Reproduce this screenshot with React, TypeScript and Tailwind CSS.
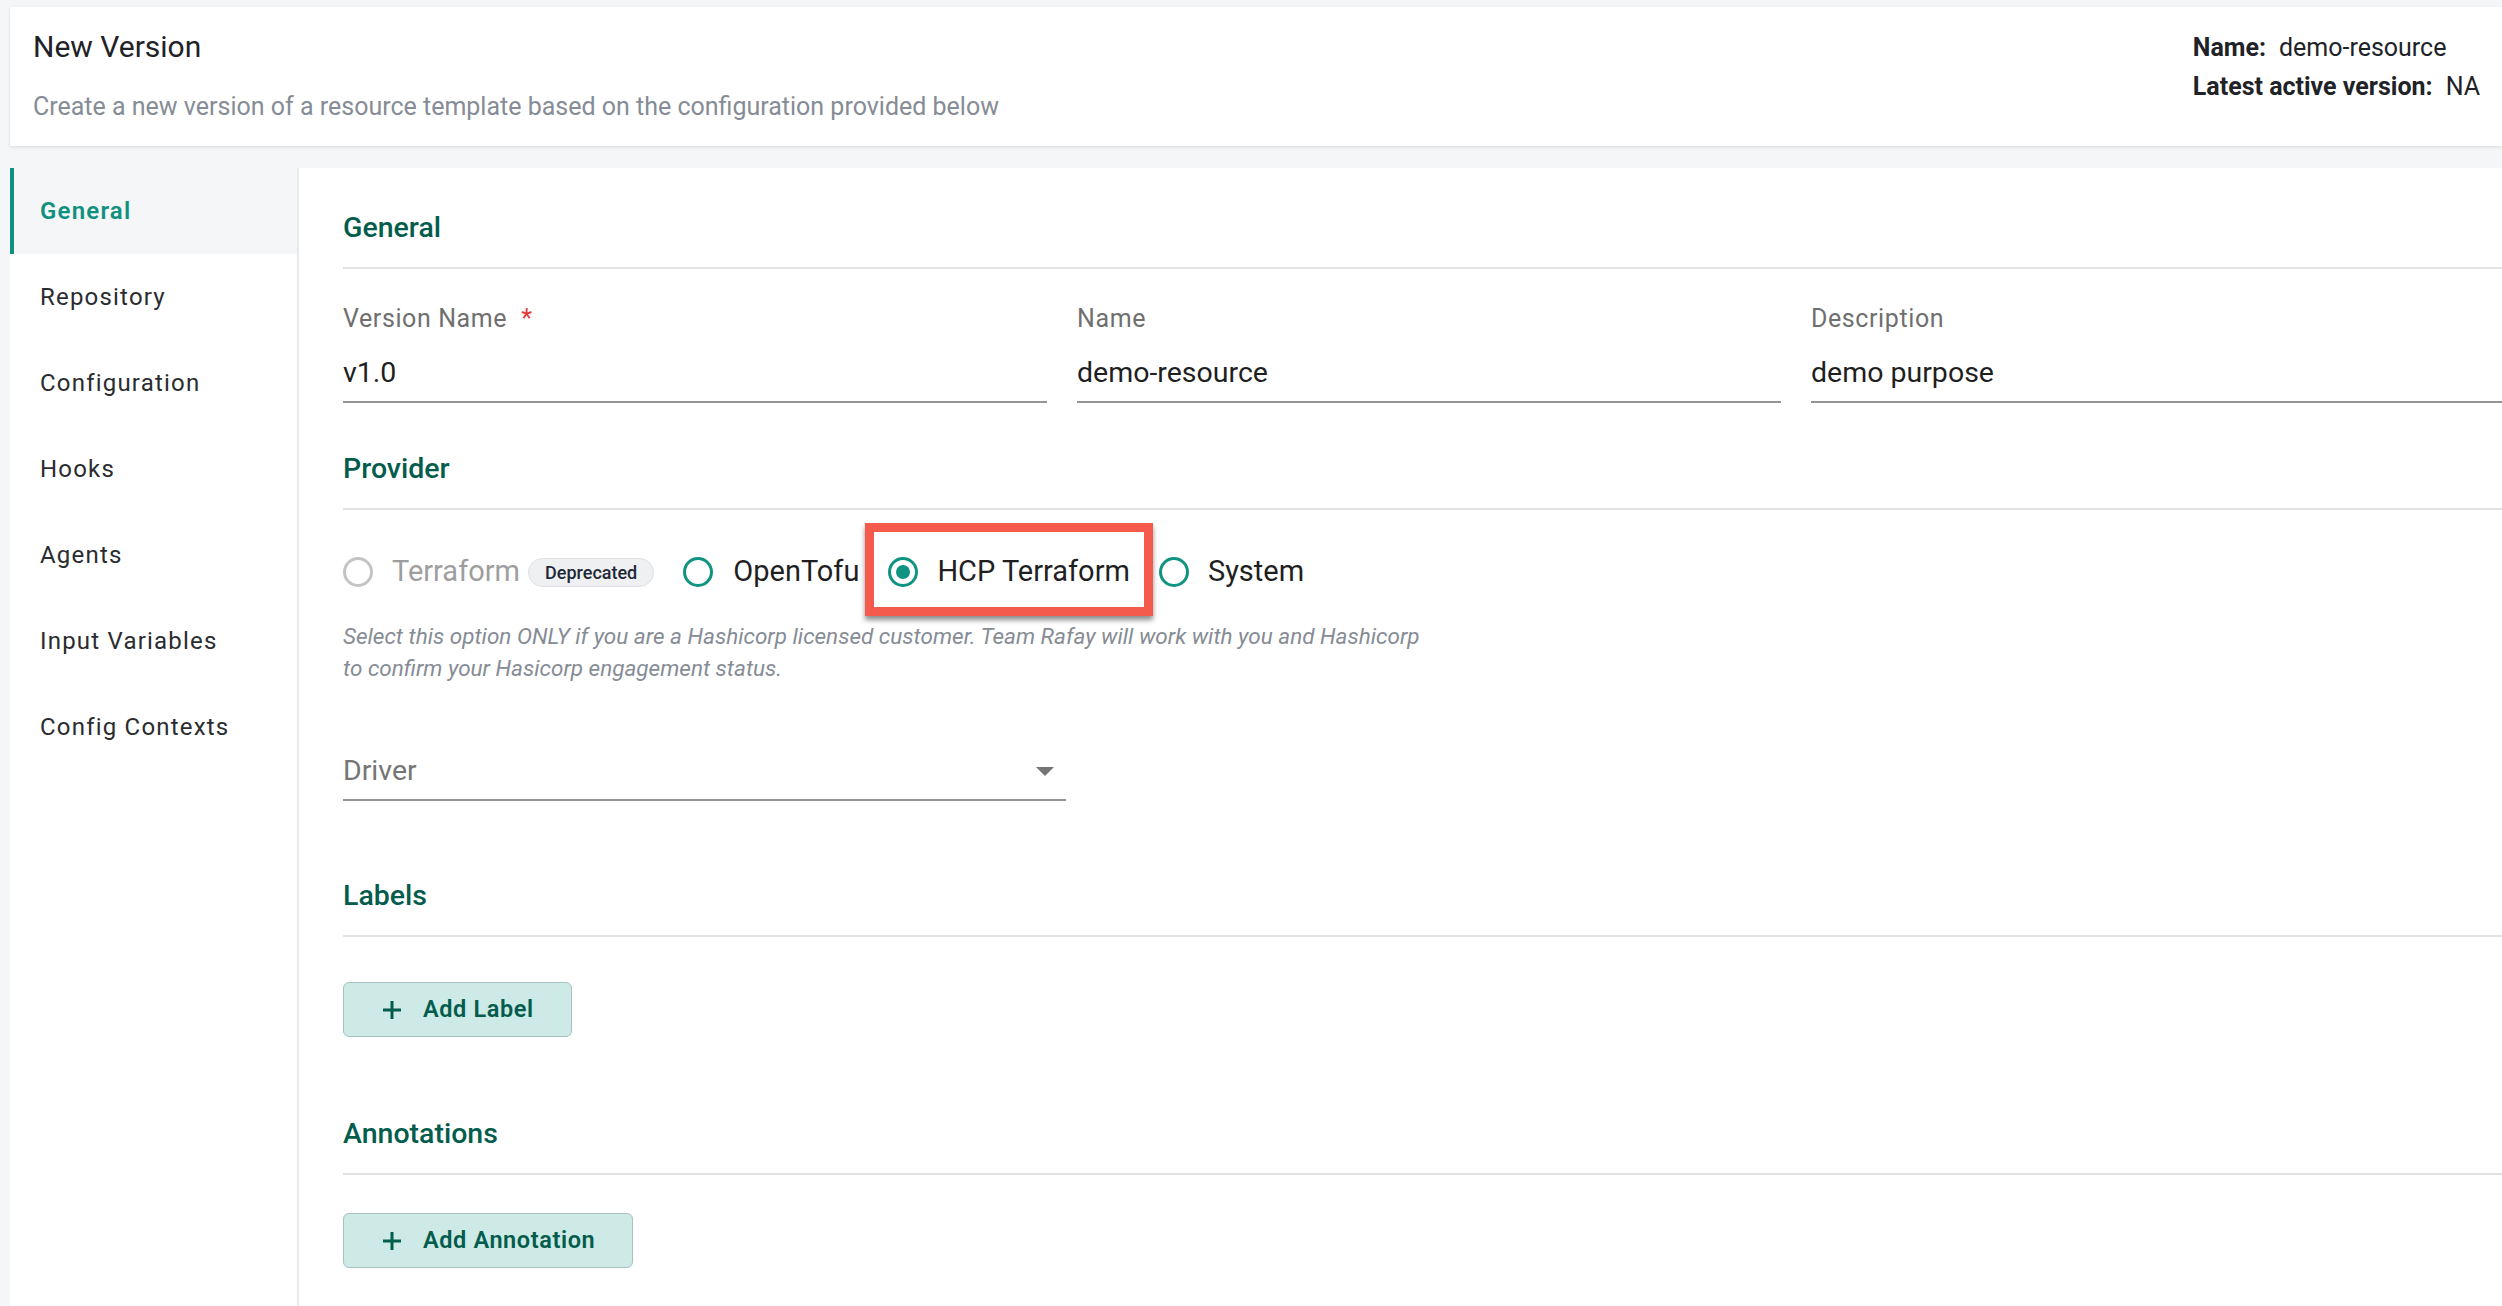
import { ReactNode } from "react";

const NAV = ["General", "Repository", "Configuration", "Hooks", "Agents", "Input Variables", "Config Contexts"];

export default function App() {
  return (
    <div className="h-[1306px] w-[2502px] overflow-hidden bg-[#f5f6f8] pl-[10px] pt-[7px] font-['Roboto',sans-serif]">
      <header className="flex h-[139px] justify-between bg-white shadow-[0_1px_3px_rgba(0,0,0,0.12)]">
        <div className="pl-[23px] pt-[23px]">
          <h1 className="text-[30px] leading-[34px] text-[#1f2328]">New Version</h1>
          <p className="mt-[29px] text-[25px] leading-[28px] text-[#868c95]">
            Create a new version of a resource template based on the configuration provided below
          </p>
        </div>
        <div className="pr-[22px] pt-[21px] text-[25px] leading-[39px] text-[#1f2328]">
          <div>
            <span className="font-bold">Name:</span>
            <span className="ml-[13px]">demo-resource</span>
          </div>
          <div>
            <span className="font-bold">Latest active version:</span>
            <span className="ml-[13px]">NA</span>
          </div>
        </div>
      </header>

      <div className="mt-[22px] flex h-[1200px]">
        <nav className="w-[289px] shrink-0 border-r-2 border-[#e8e9eb] bg-white">
          {NAV.map((item, index) => (
            <div
              key={item}
              className={
                index === 0
                  ? "flex h-[86px] items-center border-l-4 border-[#10917f] bg-[#f4f6f7] pl-[26px] text-[24px] font-semibold tracking-[1.2px] text-[#10917f]"
                  : "flex h-[86px] items-center border-l-4 border-transparent pl-[26px] text-[24px] tracking-[1.2px] text-[#2a2c2f]"
              }
            >
              {item}
            </div>
          ))}
        </nav>

        <main className="flex-1 overflow-hidden bg-white pl-[44px] pt-[21px]">
          <div className="w-[2200px]">
            <SectionTitle>General</SectionTitle>

            <div className="mt-[34px] flex gap-[30px]">
              <Field label="Version Name" value="v1.0" required />
              <Field label="Name" value="demo-resource" />
              <Field label="Description" value="demo purpose" />
            </div>

            <div className="mt-[27px]">
              <SectionTitle>Provider</SectionTitle>
            </div>

            <div className="mt-[17px] flex h-[90px] items-center gap-[29px]">
              <div className="flex items-center">
                <Radio disabled />
                <span className="ml-[19px] text-[29px] text-[#9e9e9e]">Terraform</span>
                <span className="ml-[8px] flex h-[29px] items-center rounded-full border border-[#dfe1e4] bg-[#eef0f2] px-[16px] text-[18px] font-medium text-[#1f2937]">
                  Deprecated
                </span>
              </div>
              <div className="flex items-center">
                <Radio />
                <span className="ml-[20px] text-[29px] text-[#1f1f1f]">OpenTofu</span>
              </div>
              <div className="relative flex items-center">
                <div className="absolute -bottom-[22px] -left-[23px] -right-[23px] -top-[27px] border-[9px] border-[#f45b4d] shadow-[0_4px_5px_rgba(0,0,0,0.45)]" />
                <Radio checked />
                <span className="ml-[19px] text-[29px] text-[#1f1f1f]">HCP Terraform</span>
              </div>
              <div className="flex items-center">
                <Radio />
                <span className="ml-[19px] text-[29px] text-[#1f1f1f]">System</span>
              </div>
            </div>

            <p className="mt-[3px] text-[22.5px] italic leading-[32px] text-[#868c95]">
              Select this option ONLY if you are a Hashicorp licensed customer. Team Rafay will work with you and Hashicorp
              <br />
              to confirm your Hasicorp engagement status.
            </p>

            <div className="mt-[59px] flex h-[58px] w-[723px] items-center justify-between border-b-2 border-[#959595]">
              <span className="text-[28.5px] text-[#757575]">Driver</span>
              <svg width="18" height="9" viewBox="0 0 18 9" className="mr-[12px]">
                <path d="M0 0 L18 0 L9 9 Z" fill="#757575" />
              </svg>
            </div>

            <div className="mt-[56px]">
              <SectionTitle>Labels</SectionTitle>
            </div>
            <div className="mt-[45px]">
              <AddButton>Add Label</AddButton>
            </div>

            <div className="mt-[58px]">
              <SectionTitle>Annotations</SectionTitle>
            </div>
            <div className="mt-[38px]">
              <AddButton>Add Annotation</AddButton>
            </div>
          </div>
        </main>
      </div>
    </div>
  );
}

function SectionTitle({ children }: { children: ReactNode }) {
  return (
    <div className="flex h-[80px] items-center border-b-2 border-[#e3e3e3] text-[28.5px] font-medium text-[#045c4c]">
      {children}
    </div>
  );
}

function Field({ label, value, required }: { label: string; value: string; required?: boolean }) {
  return (
    <div className="w-[704px] shrink-0">
      <div className="h-[32px] text-[25px] leading-[32px] tracking-[0.6px] text-[#6f6f6f]">
        {label}
        {required && <span className="ml-[14px] text-[#e53935]">*</span>}
      </div>
      <div className="mt-[10px] flex h-[58px] items-center border-b-2 border-[#959595] text-[28.5px] text-[#1f1f1f]">
        {value}
      </div>
    </div>
  );
}

function Radio({ checked, disabled }: { checked?: boolean; disabled?: boolean }) {
  return (
    <span
      className={
        disabled
          ? "flex h-[30px] w-[30px] items-center justify-center rounded-full border-[3px] border-[#c4c4c4]"
          : "flex h-[30px] w-[30px] items-center justify-center rounded-full border-[3px] border-[#0f9481]"
      }
    >
      {checked && <span className="h-[14px] w-[14px] rounded-full bg-[#0f9481]" />}
    </span>
  );
}

function AddButton({ children }: { children: ReactNode }) {
  return (
    <button className="flex h-[55px] items-center gap-[21px] rounded-[6px] border border-[#a5c3bf] bg-[#cdeae6] pl-[38px] pr-[37px] text-[23.5px] font-semibold tracking-[0.6px] text-[#045c4c]">
      <svg width="20" height="20" viewBox="0 0 20 20">
        <path d="M10 1 V19 M1 10 H19" stroke="#045c4c" strokeWidth="3" />
      </svg>
      {children}
    </button>
  );
}
